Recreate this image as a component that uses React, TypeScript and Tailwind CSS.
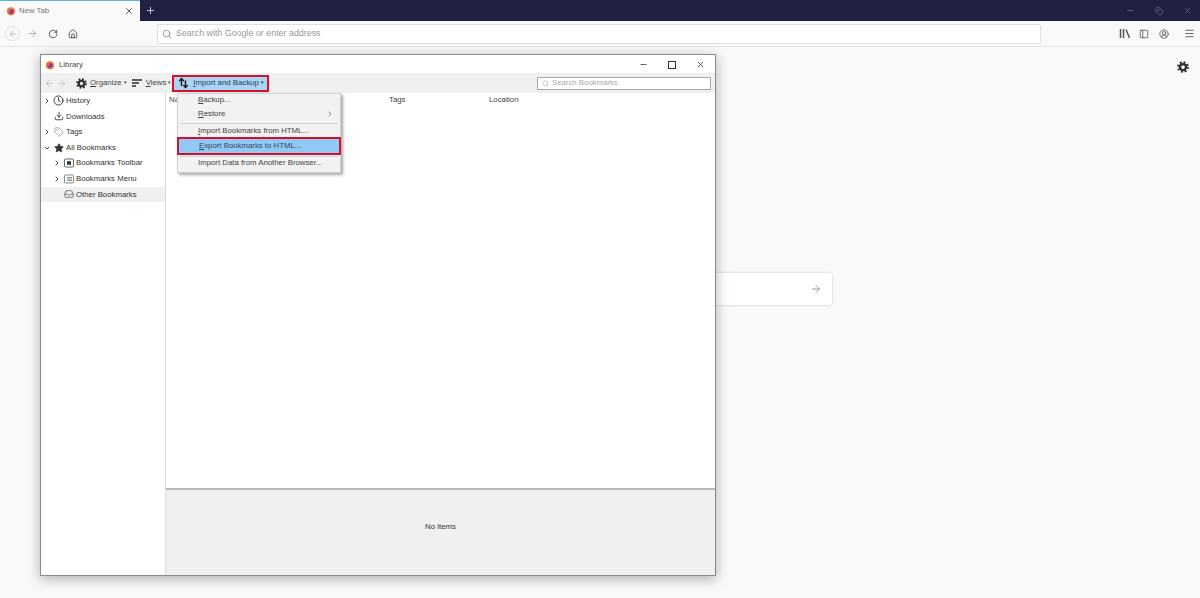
import { ArrowLeft, ArrowRight, RotateCw, Home, Search, Plus, X, Minus, Menu, Clock, Download, Tag, Star, ChevronRight, ChevronDown, PanelLeft, CircleUserRound, Inbox, Copy } from "lucide-react";

function FoxIcon({ size = 12 }: { size?: number }) {
  return (
    <svg width={size} height={size} viewBox="0 0 16 16">
      <circle cx="8" cy="8.5" r="6.5" fill="#f0703a" />
      <path d="M8 4.500a4 4 0 0 1 4 4 4 4 0 0 1-8 0c1 1 2 1.500 3 1-1-1 0-3 1-5z" fill="#7b3fa0" />
      <path d="M2 6c.5-2 2-4 4-4.500C5 3 6 3.500 8 3.500c3 0 5.500 2 6 4.500.5-3-1.500-6-4-7 1 1 1 2 1 2-3-2-7-1-9 3z" fill="#fbb03b" />
    </svg>
  );
}

function Gear({ size = 11 }: { size?: number }) {
  return (
    <svg width={size} height={size} viewBox="0 0 16 16" fill="none" stroke="#2c2c2c" className="shrink-0">
      <circle cx="8" cy="8" r="4" strokeWidth="3" />
      <circle cx="8" cy="8" r="6.3" strokeWidth="3" strokeDasharray="2.500 2.450" />
    </svg>
  );
}

function Library() {
  return (
    <svg width="12" height="11" viewBox="0 0 12 11" fill="none" stroke="#555" strokeWidth="1.500">
      <path d="M1.500 1v9M4.500 1v9M7 1.500l3.500 8.500" />
    </svg>
  );
}

function ToolbarFolder() {
  return (
    <svg width="10" height="10" viewBox="0 0 10 10" fill="none">
      <rect x="0.500" y="1" width="9" height="8" rx="1" stroke="#666" />
      <rect x="3" y="3.200" width="4" height="3.600" fill="#333" />
    </svg>
  );
}

function MenuFolder() {
  return (
    <svg width="10" height="10" viewBox="0 0 10 10" fill="none">
      <rect x="0.500" y="1" width="9" height="8" rx="1" stroke="#888" />
      <path d="M3 3.500h5M3 5h5M3 6.500h5" stroke="#777" strokeWidth="0.800" />
    </svg>
  );
}

function ImportIcon() {
  return (
    <svg width="11" height="12" viewBox="0 0 11 12" fill="none" stroke="#1c1c1c" strokeWidth="1.500" className="shrink-0">
      <path d="M3.500 9V1.800M1.200 4l2.300-2.500L5.800 4" />
      <path d="M7.500 3.500v7M5.400 8.200l2.100 2.300 2.100-2.300" />
    </svg>
  );
}

function SortLines() {
  return (
    <svg width="10" height="8" viewBox="0 0 10 8" fill="none" stroke="#2c2c2c" strokeWidth="1.300" className="shrink-0">
      <path d="M0 1h10M0 4h7M0 7h4" />
    </svg>
  );
}

function TreeRow({ label, icon, arrow, indent, active }: { label: string; icon: React.ReactNode; arrow?: "right" | "down"; indent?: boolean; active?: boolean }) {
  return (
    <div className={`flex h-[15.6px] items-center ${indent ? "pl-[10px]" : "pl-0"} ${active ? "bg-[#f0f0f0]" : ""}`}>
      <span className="flex w-[11px] justify-center text-[#444]">
        {arrow === "right" && <ChevronRight size={8} strokeWidth={3} />}
        {arrow === "down" && <ChevronDown size={8} strokeWidth={3} />}
      </span>
      <span className="flex w-[13px] justify-center text-[#333]">{icon}</span>
      <span className="ml-[1px] whitespace-nowrap text-[#333]">{label}</span>
    </div>
  );
}

function MenuItem({ first, rest, arrow }: { first: string; rest: string; arrow?: boolean }) {
  return (
    <div className="flex h-[14px] items-center justify-between pb-[2px] pl-[20px] pr-[6px] text-[#444]">
      <span className="whitespace-nowrap"><span className="underline">{first}</span>{rest}</span>
      {arrow && <ChevronRight size={8} strokeWidth={2} className="text-[#666]" />}
    </div>
  );
}

export default function App() {
  return (
    <div className="relative flex h-[598px] w-[1200px] flex-col overflow-hidden bg-[#f9f9fa] font-['Liberation_Sans',sans-serif] text-[7.8px] text-[#333]">
      {/* tab strip */}
      <div className="flex h-[21px] shrink-0 items-center bg-[#1f2044]">
        <div className="flex h-[21px] w-[140px] items-center border-t border-[#5fb0e0] bg-[#f9f9fa] px-[6px]">
          <FoxIcon size={10} />
          <span className="ml-[3px] flex-1 text-[7.8px] text-[#777]">New Tab</span>
          <X size={10} className="text-[#444]" />
        </div>
        <Plus size={11} className="ml-[5px] text-[#d0d0d8]" />
        <div className="ml-auto flex items-center gap-[20px] pr-[8px] text-[#6a6c88]">
          <Minus size={9} />
          <Copy size={8} />
          <X size={9} />
        </div>
      </div>

      {/* nav bar */}
      <div className="flex h-[26px] shrink-0 items-center border-b border-[#e6e6e8] bg-[#f9f9fa] pl-[5px] pr-[5px]">
        <div className="flex h-[15px] w-[15px] items-center justify-center rounded-full border border-[#e0e0e0]">
          <ArrowLeft size={10} className="text-[#b4b4b4]" />
        </div>
        <ArrowRight size={11} className="ml-[7px] text-[#aaa]" />
        <RotateCw size={10} className="ml-[10px] text-[#444]" />
        <Home size={10} className="ml-[10px] text-[#444]" />
        <div className="ml-[79px] flex h-[20px] w-[884px] items-center rounded-[2px] border border-[#e0e0e2] bg-white pl-[4px]">
          <Search size={10} className="text-[#888]" />
          <span className="ml-[4px] text-[8.9px] text-[#999]">Search with Google or enter address</span>
        </div>
        <div className="ml-auto flex items-center text-[#555]">
          <Library />
          <PanelLeft size={10} className="ml-[8px]" />
          <CircleUserRound size={10} className="ml-[10px]" />
          <Menu size={11} className="ml-[15px]" />
        </div>
      </div>

      {/* new tab page */}
      <div className="relative flex-1">
        <div className="absolute left-[1177px] top-[14px]"><Gear size={12} /></div>
        <div className="absolute left-[600px] top-[226px] flex h-[32px] w-[232px] items-center justify-end rounded-[3px] bg-white pr-[10px] shadow-[0_0_3px_rgba(0,0,0,0.2)]">
          <ArrowRight size={12} className="text-[#999]" />
        </div>

        {/* library window */}
        <div className="absolute left-[40px] top-[7px] flex h-[522px] w-[676px] flex-col border border-[#8a8a8a] bg-white shadow-[0_3px_12px_rgba(0,0,0,0.3)]">
          <div className="flex h-[18px] shrink-0 items-center pl-[4px] pr-[10px] pt-[1px]">
            <FoxIcon size={10} />
            <span className="ml-[4px] text-[#444]">Library</span>
            <div className="ml-auto flex items-center gap-[20px] text-[#333]">
              <Minus size={9} />
              <div className="h-[8px] w-[8px] border border-[#333]" />
              <X size={9} />
            </div>
          </div>

          <div className="relative flex h-[20px] shrink-0 items-center bg-[#f0f0f0] pl-[3px]">
            <ArrowLeft size={11} className="text-[#c4c4c4]" />
            <ArrowRight size={11} className="ml-[1px] text-[#c4c4c4]" />
            <div className="ml-[9px]"><Gear size={11} /></div>
            <span className="ml-[3px] text-[#444]"><span className="underline">O</span>rganize</span>
            <span className="ml-[2px] text-[5px] text-[#444]">▾</span>
            <div className="ml-[5px]"><SortLines /></div>
            <span className="ml-[4px] text-[#444]"><span className="underline">V</span>iews</span>
            <span className="ml-[2px] text-[5px] text-[#444]">▾</span>
            <div className="ml-[1px] flex h-[17px] w-[97px] items-center border-2 border-[#d3112f] bg-[#a9d4f2] pl-[4px]">
              <ImportIcon />
              <span className="ml-[4px] whitespace-nowrap text-[#1c3d66]"><span className="underline">I</span>mport and Backup</span>
              <span className="ml-[2px] text-[5px] text-[#1c3d66]">▾</span>
            </div>
            <div className="ml-auto mr-[4px] flex h-[13px] w-[174px] items-center border border-[#a8a8a8] bg-white pl-[4px]">
              <Search size={7} className="text-[#aaa]" />
              <span className="ml-[3px] text-[#aaa]">Search Bookmarks</span>
            </div>
          </div>

          <div className="flex min-h-0 flex-1">
            <div className="w-[125px] shrink-0 border-r border-[#dcdcdc]">
              <TreeRow label="History" icon={<Clock size={11} />} arrow="right" />
              <TreeRow label="Downloads" icon={<Download size={10} />} />
              <TreeRow label="Tags" icon={<Tag size={10} className="text-[#999]" />} arrow="right" />
              <TreeRow label="All Bookmarks" icon={<Star size={10} fill="#333" />} arrow="down" />
              <TreeRow label="Bookmarks Toolbar" icon={<ToolbarFolder />} arrow="right" indent />
              <TreeRow label="Bookmarks Menu" icon={<MenuFolder />} arrow="right" indent />
              <TreeRow label="Other Bookmarks" icon={<Inbox size={10} className="text-[#666]" />} indent active />
            </div>

            <div className="flex min-w-0 flex-1 flex-col">
              <div className="flex-1">
                <div className="flex h-[14px] items-center text-[#444]">
                  <span className="ml-[3px] w-[220px]">Name</span>
                  <span className="w-[100px]">Tags</span>
                  <span>Location</span>
                </div>
              </div>
              <div className="flex h-[87px] shrink-0 items-center justify-center border-t-2 border-[#b8b8b8] bg-[#f0f0f0] pb-[11px] text-[#333]">
                No items
              </div>
            </div>
          </div>

          {/* dropdown */}
          <div className="absolute left-[136px] top-[38px] h-[80px] w-[164px] border border-[#d0d0d0] bg-[#f2f2f2] shadow-[2px_2px_3px_rgba(0,0,0,0.35)]">
            <MenuItem first="B" rest="ackup..." />
            <MenuItem first="R" rest="estore" arrow />
            <div className="mx-[2px] my-[1px] border-t border-[#d4d4d4]" />
            <MenuItem first="I" rest="mport Bookmarks from HTML..." />
            <div className="-mx-[1px] -mt-[2px] flex h-[18px] items-center border-2 border-[#d3112f] bg-[#90c8f6] pl-[20px] text-[#33475e]">
              <span className="whitespace-nowrap"><span className="underline">E</span>xport Bookmarks to HTML...</span>
            </div>
            <div className="mx-[2px] mt-[1px] border-t border-[#d4d4d4]" />
            <MenuItem first="" rest="Import Data from Another Browser..." />
          </div>
        </div>
      </div>
    </div>
  );
}
